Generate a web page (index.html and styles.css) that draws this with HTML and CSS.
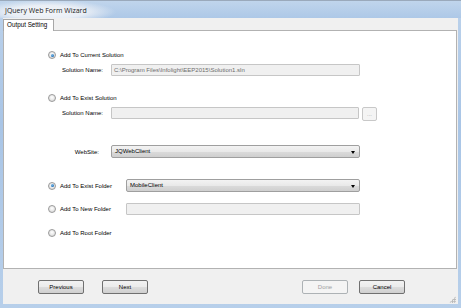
FILE: index.html
```html
<!DOCTYPE html>
<html>
<head>
<meta charset="utf-8">
<link rel="stylesheet" href="styles.css">
</head>
<body>
<div class="window">
  <div class="titlebar"><span class="title">JQuery Web Form Wizard</span></div>
  <div class="client">
    <div class="tabstrip"><div class="tab">Output Setting</div></div>
    <div class="page">
      <div class="row r1"><span class="radio checked"></span><span class="opt">Add To Current Solution</span></div>
      <div class="row r2"><span class="lbl">Solution Name:</span><div class="field wide">C:\Program Files\Infolight\EEP2015\Solution1.sln</div></div>
      <div class="row r3"><span class="radio"></span><span class="opt">Add To Exist Solution</span></div>
      <div class="row r4"><span class="lbl">Solution Name:</span><div class="field wide2"></div><div class="browse">...</div></div>
      <div class="row r5"><span class="lbl right">WebSite:</span><div class="select wide">JQWebClient<span class="arrow"></span></div></div>
      <div class="row r6"><span class="radio checked"></span><span class="opt folder">Add To Exist Folder</span><div class="select narrow">MobileClient<span class="arrow"></span></div></div>
      <div class="row r7"><span class="radio"></span><span class="opt folder">Add To New Folder</span><div class="field narrow"></div></div>
      <div class="row r8"><span class="radio"></span><span class="opt">Add To Root Folder</span></div>
    </div>
    <div class="footer">
      <div class="btn">Previous</div>
      <div class="btn next">Next</div>
      <div class="spacer"></div>
      <div class="btn disabled">Done</div>
      <div class="btn cancel">Cancel</div>
    </div>
    <div class="grip"></div>
  </div>
</div>
</body>
</html>
```

FILE: styles.css
```css
html, body { margin: 0; padding: 0; }
body { width: 461px; height: 308px; overflow: hidden; font-family: "Liberation Sans", Arial, sans-serif; }

.window {
  width: 461px; height: 308px;
  display: flex; flex-direction: column;
  background: linear-gradient(#bcd2eb, #a9c5e6 40%, #b7cfea);
  box-sizing: border-box;
}

.titlebar {
  height: 18px; flex: none;
  display: flex; align-items: center;
  padding-left: 5px;
  background:
    radial-gradient(ellipse 70px 12px at 46px 11px, rgba(244,246,249,1) 0%, rgba(236,240,246,0.95) 55%, rgba(236,240,246,0) 100%),
    linear-gradient(#c0d5ec, #adc8e7);
  border-top: 1px solid #9aa9bb;
  box-sizing: border-box;
}
.title { font-family: "Open Sans", "Liberation Sans", sans-serif; font-size: 7px; color: #1a1a1a; padding-top: 2px; }

.client {
  flex: 1;
  margin: 0 3px 4px 3px;
  background: #f0f0f0;
  display: flex; flex-direction: column;
  position: relative;
}

.tabstrip { height: 12px; flex: none; display: flex; align-items: flex-end; position: relative; z-index: 1; }
.tab {
  height: 12px; width: 51px; box-sizing: border-box;
  background: #fff;
  border: 1px solid #a7a7a7; border-bottom: none;
  font-size: 6.3px; line-height: 10px;
  padding-left: 3px;
  margin-bottom: -1px;
  color: #000;
}

.page {
  height: 239px; flex: none;
  margin-right: 1px;
  background: #fff;
  border: 1px solid #b2b2b2;
  box-sizing: border-box;
  padding: 19px 0 0 44px;
  font-size: 6px; color: #000;
}

.row { display: flex; align-items: center; }
.r1 { height: 10px; }
.r2 { height: 12px; margin-top: 4px; }
.r3 { height: 10px; margin-top: 17px; }
.r4 { height: 14px; margin-top: 4px; align-items: flex-start; }
.r4 .lbl { line-height: 12px; }
.r5 { height: 13px; margin-top: 24px; }
.r6 { height: 13px; margin-top: 21px; }
.r7 { height: 12px; margin-top: 11px; }
.r8 { height: 10px; margin-top: 13px; }

.radio {
  width: 8px; height: 8px; box-sizing: border-box; flex: none;
  border-radius: 50%;
  border: 1px solid #9a9a9a;
  background: radial-gradient(circle at 50% 40%, #ffffff 0%, #e4e4e4 60%, #d0d0d0 100%);
  margin-right: 4px;
  position: relative;
}
.radio.checked::after {
  content: ""; position: absolute; left: 1.5px; top: 1.5px;
  width: 3px; height: 3px; border-radius: 50%;
  background: radial-gradient(circle at 40% 35%, #7fc0ee, #1f6eb6 70%, #1a4f8a);
}

.opt { white-space: nowrap; }
.opt.folder { width: 66px; flex: none; }

.lbl { margin-left: 14px; width: 49px; flex: none; white-space: nowrap; }
.lbl.right { text-align: right; width: 37px; padding-right: 12px; }

.field {
  height: 12px; box-sizing: border-box;
  background: #f0f0f0;
  border: 1px solid #c6c6c6;
  border-radius: 1px;
  color: #6d6d6d;
  padding-left: 2px;
  line-height: 10px;
  white-space: nowrap;
}
.field.wide { width: 249px; }
.field.wide2 { width: 248px; }
.field.narrow { width: 234px; }

.browse {
  width: 15px; height: 14px; box-sizing: border-box;
  margin-left: 3px;
  border: 1px solid #c8c8c8; border-radius: 2px;
  background: #f4f4f4;
  color: #a6a6a6; font-size: 6px;
  text-align: center; line-height: 12px;
}

.select {
  height: 13px; box-sizing: border-box;
  border: 1px solid #9f9f9f; border-radius: 2px;
  background: linear-gradient(#f3f3f3, #e9e9e9 50%, #dbdbdb 51%, #cfcfcf);
  padding-left: 3px; line-height: 11px;
  position: relative;
}
.select.wide { width: 249px; }
.select.narrow { width: 234px; }
.arrow {
  position: absolute; right: 4px; top: 4.5px;
  width: 0; height: 0;
  border-left: 2.5px solid transparent; border-right: 2.5px solid transparent;
  border-top: 3px solid #000;
}

.footer {
  flex: 1;
  display: flex; align-items: flex-start;
  padding: 11px 53px 0 35px;
}
.btn {
  width: 46px; height: 14px; box-sizing: border-box; flex: none;
  border: 1px solid #707070; border-radius: 2px;
  background: linear-gradient(#f2f2f2, #ebebeb 50%, #dddddd 51%, #cfcfcf);
  font-size: 6px; color: #000;
  text-align: center; line-height: 12px;
}
.btn.next { margin-left: 18px; }
.btn.cancel { margin-left: 11px; }
.btn.disabled { border-color: #adb2b5; background: #f4f4f4; color: #a0a0a0; }
.spacer { flex: 1; }

.grip {
  position: absolute; right: 2px; bottom: 1px;
  width: 7px; height: 7px;
  background:
    radial-gradient(circle, #b8b8b8 0.8px, transparent 1.1px) 0 0 / 2.3px 2.3px;
  clip-path: polygon(100% 0, 100% 100%, 0 100%);
}
```
